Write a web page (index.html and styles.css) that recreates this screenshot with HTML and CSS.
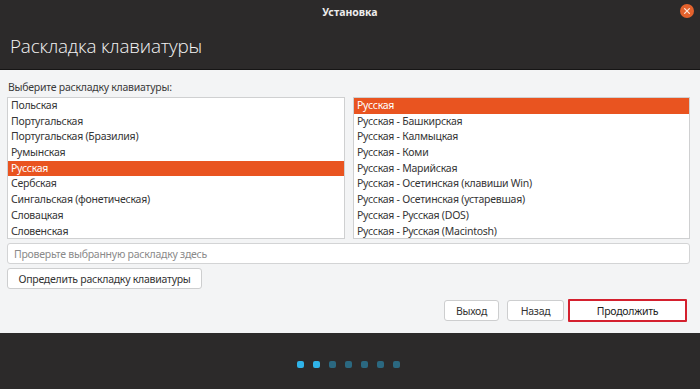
FILE: index.html
```html
<!DOCTYPE html>
<html lang="ru">
<head>
<meta charset="utf-8">
<title>Установка</title>
<link rel="stylesheet" href="styles.css">
</head>
<body>
<div class="window">
  <header class="header">
    <div class="titlebar">
      <span class="title">Установка</span>
      <span class="close">
        <svg width="14" height="14" viewBox="0 0 14 14"><circle cx="7" cy="7" r="7" fill="#e4622d"/><path d="M4.6 4.6 L9.4 9.4 M9.4 4.6 L4.6 9.4" stroke="#fbe3d6" stroke-width="1.3" stroke-linecap="round"/></svg>
      </span>
    </div>
    <h1 class="heading">Раскладка клавиатуры</h1>
  </header>
  <main class="content">
    <div class="label">Выберите раскладку клавиатуры:</div>
    <div class="lists">
      <ul class="list">
        <li>Польская</li>
        <li>Португальская</li>
        <li>Португальская (Бразилия)</li>
        <li>Румынская</li>
        <li class="sel">Русская</li>
        <li>Сербская</li>
        <li>Сингальская (фонетическая)</li>
        <li>Словацкая</li>
        <li>Словенская</li>
      </ul>
      <ul class="list">
        <li class="sel">Русская</li>
        <li>Русская - Башкирская</li>
        <li>Русская - Калмыцкая</li>
        <li>Русская - Коми</li>
        <li>Русская - Марийская</li>
        <li>Русская - Осетинская (клавиши Win)</li>
        <li>Русская - Осетинская (устаревшая)</li>
        <li>Русская - Русская (DOS)</li>
        <li>Русская - Русская (Macintosh)</li>
      </ul>
    </div>
    <input class="test" type="text" placeholder="Проверьте выбранную раскладку здесь">
    <div class="detect-row"><button class="btn detect">Определить раскладку клавиатуры</button></div>
    <div class="actions">
      <button class="btn quit">Выход</button>
      <button class="btn back">Назад</button>
      <button class="btn next">Продолжить</button>
    </div>
  </main>
  <footer class="footer">
    <span class="dot on"></span><span class="dot on"></span><span class="dot"></span><span class="dot"></span><span class="dot"></span><span class="dot"></span><span class="dot"></span>
  </footer>
</div>
</body>
</html>
```
FILE: styles.css
```css
* { box-sizing: border-box; }
html, body { margin: 0; padding: 0; }
body {
  width: 700px;
  height: 389px;
  overflow: hidden;
  font-family: "Noto Sans", sans-serif;
  font-size: 10.5px;
  letter-spacing: -0.25px;
  color: #3a3a3a;
}
.window { display: flex; flex-direction: column; height: 389px; }
.header {
  background: #2c2a2a;
  height: 70px;
  border-bottom: 1px solid #161515;
  color: #f0f0f0;
}
.titlebar {
  height: 22px;
  display: flex;
  align-items: center;
  justify-content: center;
  position: relative;
}
.title { font-weight: bold; font-size: 10.5px; letter-spacing: 0; color: #ececec; margin-top: 1px; }
.close { position: absolute; right: 6px; top: 4px; width: 14px; height: 14px; display: block; }
.close svg { display: block; }
.heading {
  margin: 11px 0 0 10px;
  font-weight: 300;
  font-size: 18.9px;
  line-height: 26px;
  color: #f4f4f4;
  font-family: "Open Sans", "Noto Sans", sans-serif;
  letter-spacing: -0.2px;
}
.content {
  flex: 1;
  background: #f3f4f5;
  padding: 9px 10px 0 7px;
  display: flex;
  flex-direction: column;
}
.label { padding-left: 1px; line-height: 16px; height: 17px; color: #3a3a3a; }
.lists { display: flex; gap: 8px; margin-top: 1px; }
.list {
  flex: 1;
  margin: 0;
  padding: 0;
  list-style: none;
  background: #fff;
  border: 1px solid #cfd0d1;
  height: 142px;
  overflow: hidden;
}
.list:first-child { flex: 0 0 338px; }
.list li { height: 15.7px; line-height: 15.7px; padding-left: 3px; white-space: nowrap; color: #353535; }
.list li.sel { background: #e95420; color: #fff; }
.test {
  margin-top: 4px;
  height: 21px;
  border: 1px solid #d3d4d5;
  border-radius: 3px;
  background: #fff;
  font-family: inherit;
  font-size: 10.5px;
  letter-spacing: -0.25px;
  padding: 0 6px;
  outline: none;
}
.test::placeholder { color: #8a8a8a; }
.detect-row { margin-top: 4px; display: flex; }
.btn {
  font-family: inherit;
  font-size: 10.5px;
  letter-spacing: -0.25px;
  color: #333;
  background: #fff;
  border: 1px solid #cdcecf;
  border-radius: 3px;
  height: 21px;
  padding: 0;
}
.detect { width: 195px; }
.actions { display: flex; justify-content: flex-end; align-items: center; margin-top: 10px; padding-right: 3px; gap: 0; }
.quit { width: 55px; margin-right: 8px; }
.back { width: 57px; margin-right: 4px; }
.next {
  width: 119px;
  height: 23px;
  border: 2px solid #d4202e;
  border-radius: 1px;
  color: #222;
}
.footer {
  height: 56px;
  background: #2c2a2a;
  display: flex;
  justify-content: center;
  align-items: center;
  gap: 9px;
  padding-right: 4px;
  padding-top: 7px;
}
.dot { width: 7px; height: 7px; border-radius: 2px; background: #2b6880; display: block; }
.dot.on { background: #2fb3e8; }
```
